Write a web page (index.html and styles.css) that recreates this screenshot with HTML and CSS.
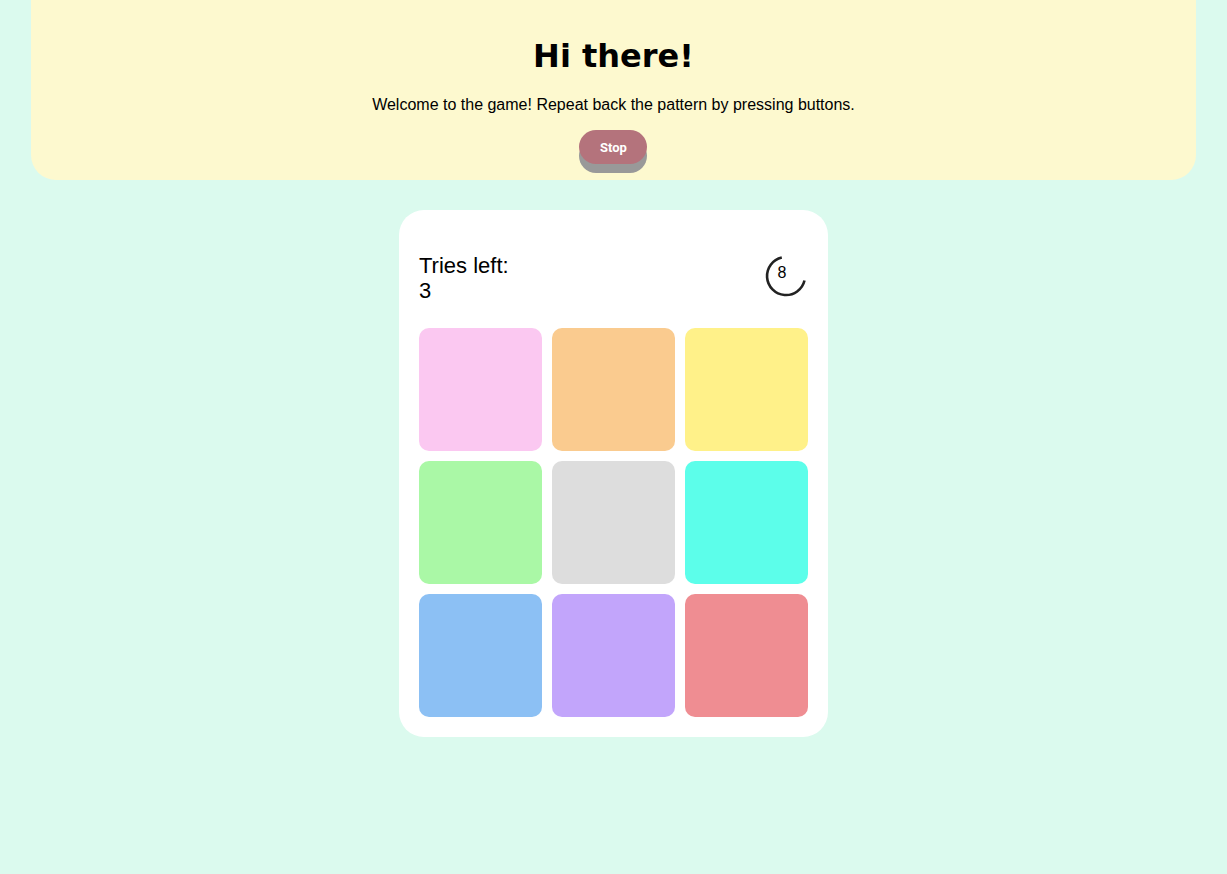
FILE: index.html
```html
<!DOCTYPE html>
<html lang="en">
<head>
<meta charset="utf-8">
<title>Memory Game</title>
<link rel="stylesheet" href="styles.css">
</head>
<body>
  <header class="banner">
    <h1 class="title">Hi there!</h1>
    <p class="intro">Welcome to the game! Repeat back the pattern by pressing buttons.</p>
    <button class="stop-btn" type="button">Stop</button>
  </header>

  <main class="board">
    <div class="board-head">
      <div class="tries">Tries left:<br>3</div>
      <div class="timer">
        <svg class="timer-ring" width="42" height="42" viewBox="0 0 42 42">
          <path d="M 16.8 2.5 A 19 19 0 1 0 39.5 25.5" fill="none" stroke="#222" stroke-width="2.6"/>
        </svg>
        <span class="timer-num">8</span>
      </div>
    </div>
    <div class="grid">
      <button class="tile pink" type="button"></button>
      <button class="tile orange" type="button"></button>
      <button class="tile yellow" type="button"></button>
      <button class="tile green" type="button"></button>
      <button class="tile gray" type="button"></button>
      <button class="tile cyan" type="button"></button>
      <button class="tile blue" type="button"></button>
      <button class="tile purple" type="button"></button>
      <button class="tile red" type="button"></button>
    </div>
  </main>
</body>
</html>
```

FILE: styles.css
```css
* { box-sizing: border-box; }

html, body {
  margin: 0;
  padding: 0;
}

body {
  background: #dbfaee;
  font-family: "Liberation Sans", Arial, sans-serif;
  color: #000;
  min-height: 874px;
}

.banner {
  width: 95%;
  margin: 0 auto;
  background: #fdf9cf;
  border-radius: 0 0 25px 25px;
  display: flex;
  flex-direction: column;
  align-items: center;
  padding: 38px 0 7px;
}

.title {
  margin: 0;
  font-family: "DejaVu Sans", Verdana, sans-serif;
  font-weight: bold;
  font-size: 32px;
  line-height: 37px;
}

.intro {
  margin: 21px 0 0;
  font-size: 16px;
  line-height: 18px;
}

.stop-btn {
  margin-top: 16px;
  margin-bottom: 9px;
  width: 68px;
  height: 34px;
  border: none;
  border-radius: 17px;
  background: #b4737c;
  color: #fff;
  font-family: "Roboto", "Liberation Sans", sans-serif;
  font-weight: bold;
  font-size: 13px;
  box-shadow: 0 9px 0 #999999;
  padding: 0;
}

.board {
  width: 429px;
  margin: 30px auto 0;
  background: #fff;
  border-radius: 25px;
  padding: 20px;
}

.board-head {
  display: flex;
  justify-content: space-between;
  align-items: center;
  padding: 23px 0 25px;
}

.tries {
  font-size: 22px;
  line-height: 25px;
}

.timer {
  position: relative;
  width: 42px;
  height: 42px;
  margin-right: 1px;
  margin-bottom: 4px;
}

.timer-ring {
  display: block;
}

.timer-num {
  position: absolute;
  top: 9px;
  left: 0;
  width: 34px;
  text-align: center;
  font-size: 16px;
  line-height: 18px;
}

.grid {
  display: grid;
  grid-template-columns: repeat(3, 123px);
  grid-auto-rows: 123px;
  gap: 10px;
}

.tile {
  border: none;
  border-radius: 10px;
  padding: 0;
}

.pink { background: #fbc8f1; }
.orange { background: #facb8f; }
.yellow { background: #fff189; }
.green { background: #aaf8a6; }
.gray { background: #dddddd; }
.cyan { background: #5cfeea; }
.blue { background: #8cc0f4; }
.purple { background: #c2a5fb; }
.red { background: #ef8d92; }
```
